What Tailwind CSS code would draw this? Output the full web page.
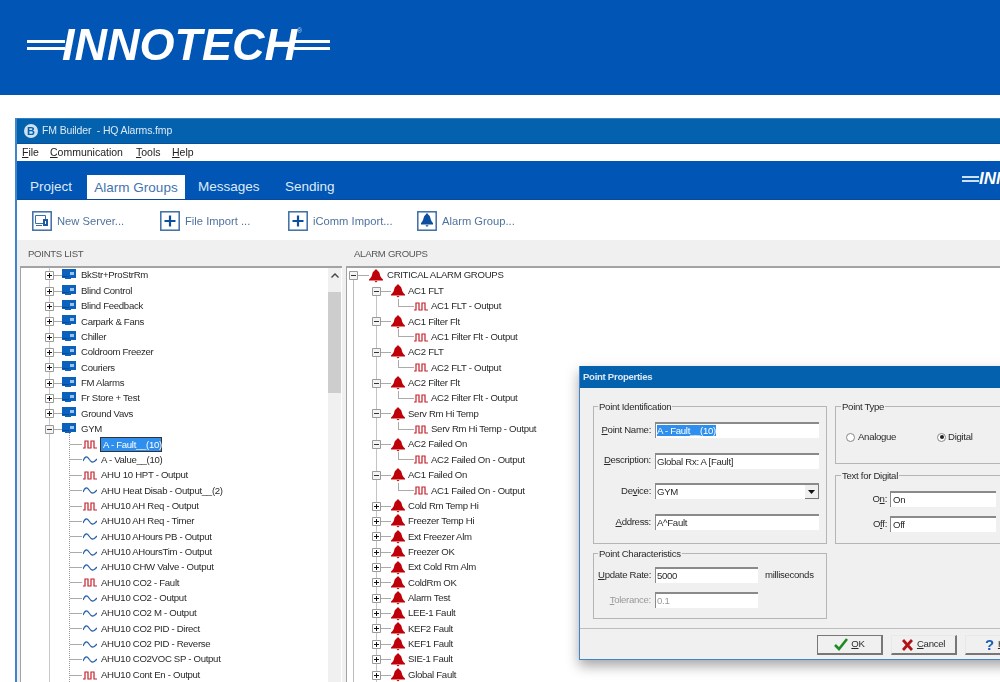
<!DOCTYPE html>
<html lang="en"><head><meta charset="utf-8"><title>Innotech FM Builder</title>
<script src="https://cdn.jsdelivr.net/npm/@tailwindcss/browser@4"></script></head>
<body class="bg-white">
<svg class="hidden" width="0" height="0">
<symbol id="bell" viewBox="0 0 14 14"><path fill="#c00008" d="M7 .5c1 0 1.4.6 1.5 1.3 1.6.8 2 2 2.3 3.5.4 2 1.2 3.4 3.2 5.2v1.1H0v-1.1c2-1.8 2.8-3.2 3.2-5.2.3-1.5.7-2.7 2.3-3.5C5.6 1.1 6 .5 7 .5zM5.5 12h3L7 13.5z"/></symbol>
<symbol id="dev" viewBox="0 0 14 11"><path fill="#0a62bd" d="M0 0h14v9H9v1H3V9H0z"/><path fill="#9cc3e8" d="M8 3h4v3H8z"/><path fill="#034a9c" d="M0 7h7v1H0z"/></symbol>
<symbol id="plus" viewBox="0 0 9 9"><path fill="#fff" stroke="#9a9a9a" d="M.5.5h8v8h-8z"/><path stroke="#111" d="M2 4.5h5M4.5 2v5"/></symbol>
<symbol id="minus" viewBox="0 0 9 9"><path fill="#f4f4f4" stroke="#9a9a9a" d="M.5.5h8v8h-8z"/><path stroke="#333" d="M2 4.5h5"/></symbol>
<symbol id="pulse" viewBox="0 0 14 9"><path fill="none" stroke="#c4222c" stroke-width="1.2" d="M0 8h2V1h3v7h3V1h3v7h3"/></symbol>
<symbol id="wave" viewBox="0 0 14 9"><path fill="none" stroke="#2a62a8" stroke-width="1.3" d="M0 6C2 1 4 1 6 4s4 5 8 0"/></symbol>
</svg>
<div class="relative w-[1000px] h-[682px] overflow-hidden font-['Liberation_Sans',sans-serif] text-[9.6px] tracking-[-0.3px] text-[#2a2a2a] blur-[0.4px]">

<header class="h-[95px] bg-[#0055b5] flex items-center pl-[27px] pb-[5px] text-white">
  <div class="flex flex-col gap-[4px] w-[38px] shrink-0"><i class="block h-[3px] bg-white"></i><i class="block h-[3px] bg-white"></i></div>
  <div class="font-bold italic text-[45px] leading-[40px] tracking-normal -ml-[3px]">INNOTECH</div>
  <div class="relative flex flex-col gap-[4px] w-[36px] shrink-0 -ml-[3px]"><i class="block h-[3px] bg-white"></i><i class="block h-[3px] bg-white"></i><span class="absolute left-[3px] -top-[14px] text-[7px] text-[#b8d0ec] tracking-normal">®</span></div>
</header>

<div class="ml-[15px] mt-[23px] border-l-2 border-[#3f86c8] h-[564px] flex flex-col">
  <div class="h-[25px] bg-[#0461ae] flex items-center pl-[7px] text-[#dbe9f6] text-[10.5px] tracking-normal border-t border-[#2f7fc4]">
    <span class="w-[14px] h-[14px] rounded-full bg-[#cfe0f0] text-[#0461ae] font-bold flex items-center justify-center text-[11px] mr-[4px]">B</span>
    <span class="tracking-[-0.15px]">FM Builder&nbsp; - HQ Alarms.fmp</span>
  </div>
  <nav class="h-[18px] bg-white flex items-center text-[10.5px] tracking-normal text-[#222] border-t border-[#0a4f9c]">
    <span class="ml-[5px] w-[28px]"><u>F</u>ile</span><span class="w-[86px]"><u>C</u>ommunication</span><span class="w-[36px]"><u>T</u>ools</span><span><u>H</u>elp</span>
  </nav>
  <div class="h-[39px] bg-[#0055b5] flex items-end text-[13.5px] tracking-normal text-[#dfeaf6] border-b border-[#0a4a96] pl-[13px] relative">
    <span class="h-[24px] leading-[24px] w-[57px]">Project</span>
    <span class="h-[24px] leading-[25px] w-[98px] bg-white text-[#3f74ae] text-center">Alarm Groups</span>
    <span class="h-[24px] leading-[24px] w-[87px] ml-[13px]">Messages</span>
    <span class="h-[24px] leading-[24px]">Sending</span>
    <div class="absolute left-[945px] top-[11px] flex items-center text-white font-bold italic text-[17px] leading-[14px] whitespace-nowrap">
      <div class="flex flex-col gap-[2px] w-[17px]"><i class="block h-[2px] bg-[#cfe0f2]"></i><i class="block h-[2px] bg-[#cfe0f2]"></i></div>INNOTECH
    </div>
  </div>
  <div class="h-[40px] bg-white flex items-center pl-[15px] pt-[2px] text-[11.2px] tracking-normal text-[#4f739f]">
    <svg class="w-[20px] h-[20px] mr-[5px]" viewBox="0 0 20 20"><rect x=".8" y=".8" width="18.4" height="18.4" fill="#fff" stroke="#3d6ea6" stroke-width="1.5"/><path fill="none" stroke="#3d6ea6" d="M3.5 4.5h10v8h-10zM4 14.5h6"/><path fill="#1f5a9e" d="M11 8h5v7h-5z"/><path fill="#fff" d="M13 10h1v3h-1z"/></svg>
    <span class="w-[103px]">New Server...</span>
    <svg class="w-[20px] h-[20px] mr-[5px]" viewBox="0 0 20 20"><rect x=".8" y=".8" width="18.4" height="18.4" fill="#fff" stroke="#3d6ea6" stroke-width="1.5"/><path stroke="#0c4f9e" stroke-width="2.2" d="M4.5 10h11M10 4.5v11"/></svg>
    <span class="w-[103px]">File Import ...</span>
    <svg class="w-[20px] h-[20px] mr-[5px]" viewBox="0 0 20 20"><rect x=".8" y=".8" width="18.4" height="18.4" fill="#fff" stroke="#3d6ea6" stroke-width="1.5"/><path stroke="#0c4f9e" stroke-width="2.2" d="M4.5 10h11M10 4.5v11"/></svg>
    <span class="w-[104px]">iComm Import...</span>
    <svg class="w-[20px] h-[20px] mr-[5px]" viewBox="0 0 20 20"><rect x=".8" y=".8" width="18.4" height="18.4" fill="#fff" stroke="#3d6ea6" stroke-width="1.5"/><path fill="#0c4f9e" d="M10 2.5c.8 0 1.2.6 1.3 1.2 1.5.7 1.8 2 2.1 3.4.3 1.9 1 3.4 2.6 5v1.4H4v-1.4c1.6-1.6 2.3-3.1 2.6-5 .3-1.4.6-2.7 2.1-3.4.1-.6.5-1.2 1.3-1.2zM8.3 14.2h3.4L10 16z"/></svg>
    <span>Alarm Group...</span>
  </div>

  <main class="flex-1 min-h-0 bg-[#f0f0f0] flex pl-[3px] gap-[4px]">
    <section class="w-[322px] shrink-0 flex flex-col">
      <h2 class="h-[26px] leading-[27px] pl-[8px] text-[#555]">POINTS LIST</h2>
      <div class="flex-1 min-h-0 flex bg-white border-t-2 border-l border-[#a3a3a3] overflow-hidden">
        <div class="relative flex-1 min-w-0">
          <i class="absolute left-[28px] top-0 bottom-0 w-px bg-[#c8c8c8]"></i>
          <i class="absolute left-[48px] top-[160px] bottom-0 border-l border-dotted border-[#999]"></i>
          <div class="relative">
          <div class="flex h-[15.37px] items-center pl-[24px]"><svg class="w-[9px] h-[9px]"><use href="#plus"/></svg><i class="w-[8px] h-px bg-[#aaa]"></i><svg class="w-[14px] h-[11px] mr-[5px] mb-[2px]"><use href="#dev"/></svg>BkStr+ProStrRm</div>
          <div class="flex h-[15.37px] items-center pl-[24px]"><svg class="w-[9px] h-[9px]"><use href="#plus"/></svg><i class="w-[8px] h-px bg-[#aaa]"></i><svg class="w-[14px] h-[11px] mr-[5px] mb-[2px]"><use href="#dev"/></svg>Blind Control</div>
          <div class="flex h-[15.37px] items-center pl-[24px]"><svg class="w-[9px] h-[9px]"><use href="#plus"/></svg><i class="w-[8px] h-px bg-[#aaa]"></i><svg class="w-[14px] h-[11px] mr-[5px] mb-[2px]"><use href="#dev"/></svg>Blind Feedback</div>
          <div class="flex h-[15.37px] items-center pl-[24px]"><svg class="w-[9px] h-[9px]"><use href="#plus"/></svg><i class="w-[8px] h-px bg-[#aaa]"></i><svg class="w-[14px] h-[11px] mr-[5px] mb-[2px]"><use href="#dev"/></svg>Carpark &amp; Fans</div>
          <div class="flex h-[15.37px] items-center pl-[24px]"><svg class="w-[9px] h-[9px]"><use href="#plus"/></svg><i class="w-[8px] h-px bg-[#aaa]"></i><svg class="w-[14px] h-[11px] mr-[5px] mb-[2px]"><use href="#dev"/></svg>Chiller</div>
          <div class="flex h-[15.37px] items-center pl-[24px]"><svg class="w-[9px] h-[9px]"><use href="#plus"/></svg><i class="w-[8px] h-px bg-[#aaa]"></i><svg class="w-[14px] h-[11px] mr-[5px] mb-[2px]"><use href="#dev"/></svg>Coldroom Freezer</div>
          <div class="flex h-[15.37px] items-center pl-[24px]"><svg class="w-[9px] h-[9px]"><use href="#plus"/></svg><i class="w-[8px] h-px bg-[#aaa]"></i><svg class="w-[14px] h-[11px] mr-[5px] mb-[2px]"><use href="#dev"/></svg>Couriers</div>
          <div class="flex h-[15.37px] items-center pl-[24px]"><svg class="w-[9px] h-[9px]"><use href="#plus"/></svg><i class="w-[8px] h-px bg-[#aaa]"></i><svg class="w-[14px] h-[11px] mr-[5px] mb-[2px]"><use href="#dev"/></svg>FM Alarms</div>
          <div class="flex h-[15.37px] items-center pl-[24px]"><svg class="w-[9px] h-[9px]"><use href="#plus"/></svg><i class="w-[8px] h-px bg-[#aaa]"></i><svg class="w-[14px] h-[11px] mr-[5px] mb-[2px]"><use href="#dev"/></svg>Fr Store + Test</div>
          <div class="flex h-[15.37px] items-center pl-[24px]"><svg class="w-[9px] h-[9px]"><use href="#plus"/></svg><i class="w-[8px] h-px bg-[#aaa]"></i><svg class="w-[14px] h-[11px] mr-[5px] mb-[2px]"><use href="#dev"/></svg>Ground Vavs</div>
          <div class="flex h-[15.37px] items-center pl-[24px]"><svg class="w-[9px] h-[9px]"><use href="#minus"/></svg><i class="w-[8px] h-px bg-[#aaa]"></i><svg class="w-[14px] h-[11px] mr-[5px] mb-[2px]"><use href="#dev"/></svg>GYM</div>
          <div class="flex h-[15.37px] items-center pl-[49px]"><i class="w-[12px] h-px bg-[#aaa] mr-px"></i><svg class="w-[14px] h-[9px] mr-[3px]"><use href="#pulse"/></svg><span class="bg-[#2f8fee] text-white w-[62px] h-[15px] pl-[2px] border border-[#333] leading-[13px] whitespace-nowrap">A - Fault__(10)</span></div>
          <div class="flex h-[15.37px] items-center pl-[49px]"><i class="w-[12px] h-px bg-[#aaa] mr-px"></i><svg class="w-[14px] h-[9px] mr-[4px]"><use href="#wave"/></svg>A - Value__(10)</div>
          <div class="flex h-[15.37px] items-center pl-[49px]"><i class="w-[12px] h-px bg-[#aaa] mr-px"></i><svg class="w-[14px] h-[9px] mr-[4px]"><use href="#pulse"/></svg>AHU 10 HPT - Output</div>
          <div class="flex h-[15.37px] items-center pl-[49px]"><i class="w-[12px] h-px bg-[#aaa] mr-px"></i><svg class="w-[14px] h-[9px] mr-[4px]"><use href="#wave"/></svg>AHU Heat Disab - Output__(2)</div>
          <div class="flex h-[15.37px] items-center pl-[49px]"><i class="w-[12px] h-px bg-[#aaa] mr-px"></i><svg class="w-[14px] h-[9px] mr-[4px]"><use href="#pulse"/></svg>AHU10 AH Req - Output</div>
          <div class="flex h-[15.37px] items-center pl-[49px]"><i class="w-[12px] h-px bg-[#aaa] mr-px"></i><svg class="w-[14px] h-[9px] mr-[4px]"><use href="#wave"/></svg>AHU10 AH Req - Timer</div>
          <div class="flex h-[15.37px] items-center pl-[49px]"><i class="w-[12px] h-px bg-[#aaa] mr-px"></i><svg class="w-[14px] h-[9px] mr-[4px]"><use href="#wave"/></svg>AHU10 AHours PB - Output</div>
          <div class="flex h-[15.37px] items-center pl-[49px]"><i class="w-[12px] h-px bg-[#aaa] mr-px"></i><svg class="w-[14px] h-[9px] mr-[4px]"><use href="#wave"/></svg>AHU10 AHoursTim - Output</div>
          <div class="flex h-[15.37px] items-center pl-[49px]"><i class="w-[12px] h-px bg-[#aaa] mr-px"></i><svg class="w-[14px] h-[9px] mr-[4px]"><use href="#wave"/></svg>AHU10 CHW Valve - Output</div>
          <div class="flex h-[15.37px] items-center pl-[49px]"><i class="w-[12px] h-px bg-[#aaa] mr-px"></i><svg class="w-[14px] h-[9px] mr-[4px]"><use href="#pulse"/></svg>AHU10 CO2 - Fault</div>
          <div class="flex h-[15.37px] items-center pl-[49px]"><i class="w-[12px] h-px bg-[#aaa] mr-px"></i><svg class="w-[14px] h-[9px] mr-[4px]"><use href="#wave"/></svg>AHU10 CO2 - Output</div>
          <div class="flex h-[15.37px] items-center pl-[49px]"><i class="w-[12px] h-px bg-[#aaa] mr-px"></i><svg class="w-[14px] h-[9px] mr-[4px]"><use href="#wave"/></svg>AHU10 CO2 M - Output</div>
          <div class="flex h-[15.37px] items-center pl-[49px]"><i class="w-[12px] h-px bg-[#aaa] mr-px"></i><svg class="w-[14px] h-[9px] mr-[4px]"><use href="#wave"/></svg>AHU10 CO2 PID - Direct</div>
          <div class="flex h-[15.37px] items-center pl-[49px]"><i class="w-[12px] h-px bg-[#aaa] mr-px"></i><svg class="w-[14px] h-[9px] mr-[4px]"><use href="#wave"/></svg>AHU10 CO2 PID - Reverse</div>
          <div class="flex h-[15.37px] items-center pl-[49px]"><i class="w-[12px] h-px bg-[#aaa] mr-px"></i><svg class="w-[14px] h-[9px] mr-[4px]"><use href="#wave"/></svg>AHU10 CO2VOC SP - Output</div>
          <div class="flex h-[15.37px] items-center pl-[49px]"><i class="w-[12px] h-px bg-[#aaa] mr-px"></i><svg class="w-[14px] h-[9px] mr-[4px]"><use href="#pulse"/></svg>AHU10 Cont En - Output</div>
          </div>
        </div>
        <div class="w-[13px] mr-px shrink-0 bg-[#f0f0f0] flex flex-col">
          <div class="h-[24px] flex justify-center pt-[5px]"><svg class="w-[8px] h-[5px]" viewBox="0 0 8 5"><path fill="none" stroke="#444" stroke-width="1.4" d="M.5 4.5L4 1l3.5 3.5"/></svg></div>
          <div class="h-[101px] bg-[#cdcdcd]"></div>
        </div>
      </div>
    </section>

    <section class="flex-1 min-w-0 flex flex-col">
      <h2 class="h-[26px] leading-[27px] pl-[8px] text-[#555]">ALARM GROUPS</h2>
      <div class="relative flex-1 min-h-0 bg-white border-t-2 border-l border-[#a3a3a3] overflow-hidden">
        <i class="absolute left-[6px] top-[10px] bottom-0 w-px bg-[#bbb]"></i>
        <i class="absolute left-[29px] top-[25px] bottom-0 w-px bg-[#c4c4c4]"></i>
        <div class="relative">
        <div class="flex h-[15.37px] items-center pl-[2px]"><svg class="w-[9px] h-[9px]"><use href="#minus"/></svg><i class="w-[11px] h-px bg-[#aaa]"></i><svg class="w-[14px] h-[14px] mr-[4px]"><use href="#bell"/></svg>CRITICAL ALARM GROUPS</div>
        <div class="flex h-[15.37px] items-center pl-[25px]"><svg class="w-[9px] h-[9px]"><use href="#minus"/></svg><i class="w-[10px] h-px bg-[#aaa]"></i><svg class="w-[14px] h-[14px] mr-[3px]"><use href="#bell"/></svg>AC1 FLT</div>
        <div class="flex h-[15.37px] items-center pl-[51px]"><i class="self-start h-[8px] w-[16px] border-l border-b border-[#aaa]"></i><svg class="w-[14px] h-[9px] mr-[3px]"><use href="#pulse"/></svg>AC1 FLT - Output</div>
        <div class="flex h-[15.37px] items-center pl-[25px]"><svg class="w-[9px] h-[9px]"><use href="#minus"/></svg><i class="w-[10px] h-px bg-[#aaa]"></i><svg class="w-[14px] h-[14px] mr-[3px]"><use href="#bell"/></svg>AC1 Filter Flt</div>
        <div class="flex h-[15.37px] items-center pl-[51px]"><i class="self-start h-[8px] w-[16px] border-l border-b border-[#aaa]"></i><svg class="w-[14px] h-[9px] mr-[3px]"><use href="#pulse"/></svg>AC1 Filter Flt - Output</div>
        <div class="flex h-[15.37px] items-center pl-[25px]"><svg class="w-[9px] h-[9px]"><use href="#minus"/></svg><i class="w-[10px] h-px bg-[#aaa]"></i><svg class="w-[14px] h-[14px] mr-[3px]"><use href="#bell"/></svg>AC2 FLT</div>
        <div class="flex h-[15.37px] items-center pl-[51px]"><i class="self-start h-[8px] w-[16px] border-l border-b border-[#aaa]"></i><svg class="w-[14px] h-[9px] mr-[3px]"><use href="#pulse"/></svg>AC2 FLT - Output</div>
        <div class="flex h-[15.37px] items-center pl-[25px]"><svg class="w-[9px] h-[9px]"><use href="#minus"/></svg><i class="w-[10px] h-px bg-[#aaa]"></i><svg class="w-[14px] h-[14px] mr-[3px]"><use href="#bell"/></svg>AC2 Filter Flt</div>
        <div class="flex h-[15.37px] items-center pl-[51px]"><i class="self-start h-[8px] w-[16px] border-l border-b border-[#aaa]"></i><svg class="w-[14px] h-[9px] mr-[3px]"><use href="#pulse"/></svg>AC2 Filter Flt - Output</div>
        <div class="flex h-[15.37px] items-center pl-[25px]"><svg class="w-[9px] h-[9px]"><use href="#minus"/></svg><i class="w-[10px] h-px bg-[#aaa]"></i><svg class="w-[14px] h-[14px] mr-[3px]"><use href="#bell"/></svg>Serv Rm Hi Temp</div>
        <div class="flex h-[15.37px] items-center pl-[51px]"><i class="self-start h-[8px] w-[16px] border-l border-b border-[#aaa]"></i><svg class="w-[14px] h-[9px] mr-[3px]"><use href="#pulse"/></svg>Serv Rm Hi Temp - Output</div>
        <div class="flex h-[15.37px] items-center pl-[25px]"><svg class="w-[9px] h-[9px]"><use href="#minus"/></svg><i class="w-[10px] h-px bg-[#aaa]"></i><svg class="w-[14px] h-[14px] mr-[3px]"><use href="#bell"/></svg>AC2 Failed On</div>
        <div class="flex h-[15.37px] items-center pl-[51px]"><i class="self-start h-[8px] w-[16px] border-l border-b border-[#aaa]"></i><svg class="w-[14px] h-[9px] mr-[3px]"><use href="#pulse"/></svg>AC2 Failed On - Output</div>
        <div class="flex h-[15.37px] items-center pl-[25px]"><svg class="w-[9px] h-[9px]"><use href="#minus"/></svg><i class="w-[10px] h-px bg-[#aaa]"></i><svg class="w-[14px] h-[14px] mr-[3px]"><use href="#bell"/></svg>AC1 Failed On</div>
        <div class="flex h-[15.37px] items-center pl-[51px]"><i class="self-start h-[8px] w-[16px] border-l border-b border-[#aaa]"></i><svg class="w-[14px] h-[9px] mr-[3px]"><use href="#pulse"/></svg>AC1 Failed On - Output</div>
        <div class="flex h-[15.37px] items-center pl-[25px]"><svg class="w-[9px] h-[9px]"><use href="#plus"/></svg><i class="w-[10px] h-px bg-[#aaa]"></i><svg class="w-[14px] h-[14px] mr-[3px]"><use href="#bell"/></svg>Cold Rm Temp Hi</div>
        <div class="flex h-[15.37px] items-center pl-[25px]"><svg class="w-[9px] h-[9px]"><use href="#plus"/></svg><i class="w-[10px] h-px bg-[#aaa]"></i><svg class="w-[14px] h-[14px] mr-[3px]"><use href="#bell"/></svg>Freezer Temp Hi</div>
        <div class="flex h-[15.37px] items-center pl-[25px]"><svg class="w-[9px] h-[9px]"><use href="#plus"/></svg><i class="w-[10px] h-px bg-[#aaa]"></i><svg class="w-[14px] h-[14px] mr-[3px]"><use href="#bell"/></svg>Ext Freezer Alm</div>
        <div class="flex h-[15.37px] items-center pl-[25px]"><svg class="w-[9px] h-[9px]"><use href="#plus"/></svg><i class="w-[10px] h-px bg-[#aaa]"></i><svg class="w-[14px] h-[14px] mr-[3px]"><use href="#bell"/></svg>Freezer OK</div>
        <div class="flex h-[15.37px] items-center pl-[25px]"><svg class="w-[9px] h-[9px]"><use href="#plus"/></svg><i class="w-[10px] h-px bg-[#aaa]"></i><svg class="w-[14px] h-[14px] mr-[3px]"><use href="#bell"/></svg>Ext Cold Rm Alm</div>
        <div class="flex h-[15.37px] items-center pl-[25px]"><svg class="w-[9px] h-[9px]"><use href="#plus"/></svg><i class="w-[10px] h-px bg-[#aaa]"></i><svg class="w-[14px] h-[14px] mr-[3px]"><use href="#bell"/></svg>ColdRm OK</div>
        <div class="flex h-[15.37px] items-center pl-[25px]"><svg class="w-[9px] h-[9px]"><use href="#plus"/></svg><i class="w-[10px] h-px bg-[#aaa]"></i><svg class="w-[14px] h-[14px] mr-[3px]"><use href="#bell"/></svg>Alarm Test</div>
        <div class="flex h-[15.37px] items-center pl-[25px]"><svg class="w-[9px] h-[9px]"><use href="#plus"/></svg><i class="w-[10px] h-px bg-[#aaa]"></i><svg class="w-[14px] h-[14px] mr-[3px]"><use href="#bell"/></svg>LEE-1 Fault</div>
        <div class="flex h-[15.37px] items-center pl-[25px]"><svg class="w-[9px] h-[9px]"><use href="#plus"/></svg><i class="w-[10px] h-px bg-[#aaa]"></i><svg class="w-[14px] h-[14px] mr-[3px]"><use href="#bell"/></svg>KEF2 Fault</div>
        <div class="flex h-[15.37px] items-center pl-[25px]"><svg class="w-[9px] h-[9px]"><use href="#plus"/></svg><i class="w-[10px] h-px bg-[#aaa]"></i><svg class="w-[14px] h-[14px] mr-[3px]"><use href="#bell"/></svg>KEF1 Fault</div>
        <div class="flex h-[15.37px] items-center pl-[25px]"><svg class="w-[9px] h-[9px]"><use href="#plus"/></svg><i class="w-[10px] h-px bg-[#aaa]"></i><svg class="w-[14px] h-[14px] mr-[3px]"><use href="#bell"/></svg>SIE-1 Fault</div>
        <div class="flex h-[15.37px] items-center pl-[25px]"><svg class="w-[9px] h-[9px]"><use href="#plus"/></svg><i class="w-[10px] h-px bg-[#aaa]"></i><svg class="w-[14px] h-[14px] mr-[3px]"><use href="#bell"/></svg>Global Fault</div>
        </div>
      </div>
    </section>
  </main>
</div>

<!-- dialog -->
<div class="absolute left-[579px] top-[366px] w-[460px] h-[294px] bg-[#f0f0f0] border-l border-b border-[#3f86c8] shadow-[0_6px_12px_rgba(0,0,0,0.35)] flex flex-col">
  <div class="h-[22px] shrink-0 bg-[#0461ae] text-[#dbe9f6] font-bold leading-[21px] pl-[3px]">Point Properties</div>
  <div class="flex gap-[8px] pl-[13px] pt-[12px] h-[241px] border-b border-[#bdbdbd]">
    <div class="w-[234px] shrink-0 flex flex-col gap-[3px]">
      <fieldset class="h-[144px] border border-[#b5b5b5] pl-[4px]">
        <legend class="px-px leading-[12px] translate-y-px">Point Identification</legend>
        <div class="flex flex-col gap-[14.7px] pt-[10px]">
          <div class="flex items-center gap-[4px]"><label class="w-[53px] text-right whitespace-nowrap"><u>P</u>oint Name:</label><div class="w-[164px] h-[16px] bg-white border-t-2 border-l border-[#8a8a8a] pl-[1px] leading-[14px]"><span class="bg-[#2f8fee] text-white">A - Fault__(10)</span></div></div>
          <div class="flex items-center gap-[4px]"><label class="w-[53px] text-right whitespace-nowrap"><u>D</u>escription:</label><div class="w-[164px] h-[16px] bg-white border-t-2 border-l border-[#8a8a8a] pl-[1px] leading-[14px]">Global Rx: A [Fault]</div></div>
          <div class="flex items-center gap-[4px]"><label class="w-[53px] text-right">De<u>v</u>ice:</label><div class="w-[164px] h-[16px] bg-white border-t-2 border-l border-[#8a8a8a] pl-[1px] leading-[14px] flex justify-between">GYM<span class="w-[14px] h-[14px] bg-[#efefef] border-r border-b border-[#777] flex items-center justify-center"><svg class="w-[7px] h-[4px]" viewBox="0 0 7 4"><path fill="#111" d="M0 0h7L3.5 4z"/></svg></span></div></div>
          <div class="flex items-center gap-[4px]"><label class="w-[53px] text-right"><u>A</u>ddress:</label><div class="w-[164px] h-[16px] bg-white border-t-2 border-l border-[#8a8a8a] pl-[1px] leading-[14px]">A^Fault</div></div>
        </div>
      </fieldset>
      <fieldset class="h-[72px] border border-[#b5b5b5] pl-[4px]">
        <legend class="px-px leading-[12px] translate-y-px">Point Characteristics</legend>
        <div class="flex flex-col gap-[9px] pt-[8px]">
          <div class="flex items-center gap-[4px]"><label class="w-[53px] text-right whitespace-nowrap"><u>U</u>pdate Rate:</label><div class="w-[103px] h-[16px] bg-white border-t-2 border-l border-[#8a8a8a] pl-[1px] leading-[14px]">5000</div><span class="ml-[3px]">milliseconds</span></div>
          <div class="flex items-center gap-[4px] text-[#999]"><label class="w-[53px] text-right"><u>T</u>olerance:</label><div class="w-[103px] h-[16px] bg-white border-t-2 border-l border-[#8a8a8a] pl-[1px] leading-[14px]">0.1</div></div>
        </div>
      </fieldset>
    </div>
    <div class="w-[190px] shrink-0 flex flex-col gap-[5px]">
      <fieldset class="h-[64px] border border-[#b5b5b5] pl-[10px]">
        <legend class="-ml-[5px] px-px leading-[12px] translate-y-px">Point Type</legend>
        <div class="flex items-center pt-[18px]">
          <span class="w-[9px] h-[9px] rounded-full bg-white border border-[#888] mr-[3px]"></span><span class="w-[79px]">Analogue</span>
          <span class="w-[9px] h-[9px] rounded-full bg-white border border-[#888] mr-[2px] flex items-center justify-center"><i class="w-[4px] h-[4px] rounded-full bg-[#222]"></i></span><span>Digital</span>
        </div>
      </fieldset>
      <fieldset class="h-[75px] border border-[#b5b5b5]">
        <legend class="ml-[5px] px-px leading-[12px] translate-y-px">Text for Digital</legend>
        <div class="flex flex-col gap-[9px] pt-[10px] pl-[36px]">
          <div class="flex items-center gap-[3px]"><label class="w-[15px] text-right">O<u>n</u>:</label><div class="w-[106px] h-[16px] bg-white border-t-2 border-l border-[#8a8a8a] pl-[2px] leading-[14px]">On</div></div>
          <div class="flex items-center gap-[3px]"><label class="w-[15px] text-right">O<u>f</u>f:</label><div class="w-[106px] h-[16px] bg-white border-t-2 border-l border-[#8a8a8a] pl-[2px] leading-[14px]">Off</div></div>
        </div>
      </fieldset>
    </div>
  </div>
  <div class="flex gap-[8px] pl-[237px] pt-[6px]">
    <button class="w-[66px] h-[20px] bg-[#f0f0f0] border border-[#777] border-r-2 border-b-2 flex items-center justify-center gap-[3px]"><svg class="w-[14px] h-[13px]" viewBox="0 0 14 13"><path fill="none" stroke="#1f8a24" stroke-width="2.6" d="M1 7l4 4 8-10"/></svg><span><u>O</u>K</span></button>
    <button class="w-[66px] h-[20px] bg-[#f0f0f0] border border-[#e8e8e8] border-r-2 border-b-2 border-r-[#777] border-b-[#777] flex items-center justify-center gap-[4px]"><svg class="w-[11px] h-[12px]" viewBox="0 0 11 12"><path stroke="#b01218" stroke-width="2.8" d="M1 1l9 10M10 1L1 11"/></svg><span><u>C</u>ancel</span></button>
    <button class="w-[66px] h-[20px] bg-[#f0f0f0] border border-[#e8e8e8] border-r-2 border-b-2 border-r-[#777] border-b-[#777] flex items-center pl-[19px] gap-[4px]"><span class="text-[#1a5fb0] font-bold text-[15px] leading-[15px]">?</span><span><u>H</u>elp</span></button>
  </div>
</div>
</div>
</body></html>
